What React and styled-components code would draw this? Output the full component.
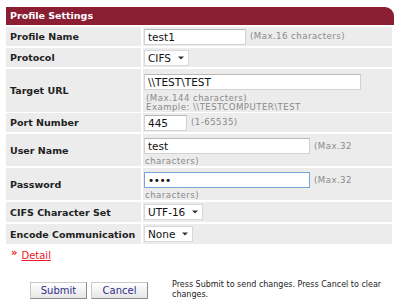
import React from "react";
import styled, { createGlobalStyle } from "styled-components";

const GlobalStyle = createGlobalStyle`
  html, body {
    margin: 0;
    padding: 0;
    background: #ffffff;
  }
  body {
    font-family: "DejaVu Sans", Verdana, sans-serif;
    color: #222;
  }
`;

const Page = styled.div`
  width: 400px;
  height: 306px;
  padding: 7px 0 0 6px;
  box-sizing: border-box;
  overflow: hidden;
`;

const Header = styled.div`
  width: 388px;
  height: 18px;
  background: #8a1f33;
  border-top-right-radius: 9px;
  color: #fff;
  font-weight: bold;
  font-size: 9.5px;
  line-height: 18px;
  padding-left: 4px;
  box-sizing: border-box;
`;

const Rows = styled.div`
  width: 386px;
  display: flex;
  flex-direction: column;
  gap: 2px;
  padding-top: 2px;
`;

const Row = styled.div`
  display: grid;
  grid-template-columns: 135px 1fr;
  gap: 2px;
  height: ${(p) => p.$h || 19}px;
`;

const Label = styled.div`
  background: #ececec;
  font-weight: bold;
  font-size: 9.5px;
  color: #222;
  display: flex;
  align-items: center;
  padding-left: 4px;
  white-space: nowrap;
`;

const Value = styled.div`
  background: #ececec;
  padding: ${(p) => p.$pad || "0 0 0 1px"};
  box-sizing: border-box;
  display: flex;
  flex-wrap: ${(p) => (p.$wrap ? "wrap" : "nowrap")};
  flex-direction: ${(p) => (p.$column ? "column" : "row")};
  align-items: ${(p) => (p.$column ? "flex-start" : "center")};
  align-content: flex-start;
`;

const Field = styled.input`
  width: ${(p) => p.$w}px;
  height: 16px;
  box-sizing: border-box;
  border: 1px solid ${(p) => (p.$focus ? "#7aa3d6" : "#d2d2d2")};
  border-top-color: ${(p) => (p.$focus ? "#7aa3d6" : "#b8b8b8")};
  background: #fff;
  font-family: "DejaVu Sans", Verdana, sans-serif;
  font-size: 10.5px;
  color: #111;
  padding: 0 3px;
  margin: 0;
  outline: none;
  letter-spacing: ${(p) => (p.type === "password" ? "-0.5px" : "0")};
`;

const Hint = styled.span`
  font-size: 8.6px;
  letter-spacing: 0.45px;
  color: #8a8a8a;
  margin-left: ${(p) => p.$ml ?? 4}px;
  margin-top: ${(p) => p.$mt ?? 0}px;
  line-height: 9px;
  white-space: nowrap;
  flex-basis: ${(p) => (p.$break ? "100%" : "auto")};
`;

const Select = styled.div`
  height: 16px;
  box-sizing: border-box;
  border: 1px solid #d8d8d8;
  background: #fff;
  display: inline-flex;
  align-items: center;
  gap: 7px;
  padding: 0 4px 0 3px;
  font-size: 10.5px;
  color: #111;
`;

const Caret = () => (
  <svg width="6" height="4" viewBox="0 0 6 4">
    <path d="M0 0.5 L6 0.5 L3 3.5 Z" fill="#333" />
  </svg>
);

const DetailLine = styled.div`
  margin-top: 5px;
  padding-left: 5px;
  height: 12px;
  display: flex;
  align-items: center;
  gap: 4px;
  font-size: 10px;
  color: #e8202a;
`;

const Chevrons = styled.span`
  font-weight: bold;
  font-size: 10px;
  line-height: 10px;
  position: relative;
  top: -2px;
`;

const DetailLink = styled.a`
  color: #e8202a;
  text-decoration: underline;
  cursor: pointer;
`;

const Footer = styled.div`
  margin-top: 19px;
  display: flex;
  align-items: flex-start;
`;

const Buttons = styled.div`
  display: flex;
  gap: 4px;
  padding-left: 24px;
  padding-top: 2px;
`;

const Button = styled.button`
  width: 57px;
  height: 17px;
  box-sizing: border-box;
  border: 1px solid #c9c9c9;
  border-right-color: #8c8c8c;
  border-bottom-color: #8c8c8c;
  background: linear-gradient(#ffffff, #e6e6e6);
  font-family: "DejaVu Sans", Verdana, sans-serif;
  font-size: 10px;
  color: #2e2e8c;
  padding: 0;
  line-height: 15px;
`;

const Note = styled.div`
  margin-left: 24px;
  font-size: 8px;
  line-height: 10px;
  color: #222;
  width: 215px;
`;

export default function App() {
  return (
    <>
      <GlobalStyle />
      <Page>
        <Header>Profile Settings</Header>
        <Rows>
          <Row>
            <Label>Profile Name</Label>
            <Value>
              <Field $w={102} defaultValue="test1" />
              <Hint>(Max.16 characters)</Hint>
            </Value>
          </Row>
          <Row>
            <Label>Protocol</Label>
            <Value>
              <Select>
                CIFS
                <Caret />
              </Select>
            </Value>
          </Row>
          <Row $h={42}>
            <Label>Target URL</Label>
            <Value $column $pad="5px 0 0 1px">
              <Field $w={217} defaultValue="\\TEST\TEST" />
              <Hint $ml={2} $mt={4}>
                (Max.144 characters)
              </Hint>
              <Hint $ml={2}>Example: \\TESTCOMPUTER\TEST</Hint>
            </Value>
          </Row>
          <Row>
            <Label>Port Number</Label>
            <Value>
              <Field $w={43} defaultValue="445" />
              <Hint>(1-65535)</Hint>
            </Value>
          </Row>
          <Row $h={32}>
            <Label>User Name</Label>
            <Value $wrap $pad="4px 0 0 1px">
              <Field $w={166} defaultValue="test" />
              <Hint>(Max.32</Hint>
              <Hint $ml={1} $mt={3} $break>
                characters)
              </Hint>
            </Value>
          </Row>
          <Row $h={32}>
            <Label>Password</Label>
            <Value $wrap $pad="4px 0 0 1px">
              <Field $w={166} $focus type="password" defaultValue="test" />
              <Hint>(Max.32</Hint>
              <Hint $ml={1} $mt={3} $break>
                characters)
              </Hint>
            </Value>
          </Row>
          <Row $h={20}>
            <Label>CIFS Character Set</Label>
            <Value>
              <Select>
                UTF-16
                <Caret />
              </Select>
            </Value>
          </Row>
          <Row $h={20}>
            <Label>Encode Communication</Label>
            <Value>
              <Select>
                None
                <Caret />
              </Select>
            </Value>
          </Row>
        </Rows>
        <DetailLine>
          <Chevrons>»</Chevrons>
          <DetailLink>Detail</DetailLink>
        </DetailLine>
        <Footer>
          <Buttons>
            <Button>Submit</Button>
            <Button>Cancel</Button>
          </Buttons>
          <Note>Press Submit to send changes. Press Cancel to clear changes.</Note>
        </Footer>
      </Page>
    </>
  );
}
